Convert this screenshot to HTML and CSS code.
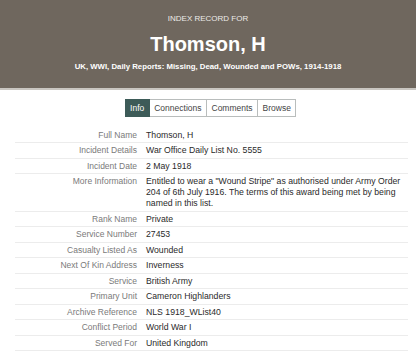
FILE: index.html
```html
<!DOCTYPE html>
<html>
  <head>
    <meta charset="utf-8" />
    <title>Thomson, H - Index Record</title>
    <link rel="stylesheet" href="styles.css">
  </head>
  <body>
    <div class="record-header">
      <div class="record-kicker">Index Record For</div>
      <h1>Thomson, H</h1>
      <div class="record-source">UK, WWI, Daily Reports: Missing, Dead, Wounded and POWs, 1914-1918</div>
    </div>

    <div class="tabs">
      <a class="tab active">Info</a>
      <a class="tab">Connections</a>
      <a class="tab">Comments</a>
      <a class="tab">Browse</a>
    </div>

    <div class="record-table">
      <div class="row"><div class="label">Full Name</div><div class="value">Thomson, H</div></div>
      <div class="row"><div class="label">Incident Details</div><div class="value">War Office Daily List No. 5555</div></div>
      <div class="row"><div class="label">Incident Date</div><div class="value">2 May 1918</div></div>
      <div class="row"><div class="label">More Information</div><div class="value">Entitled to wear a "Wound Stripe" as authorised under Army Order 204 of 6th July 1916. The terms of this award being met by being named in this list.</div></div>
      <div class="row"><div class="label">Rank Name</div><div class="value">Private</div></div>
      <div class="row"><div class="label">Service Number</div><div class="value">27453</div></div>
      <div class="row"><div class="label">Casualty Listed As</div><div class="value">Wounded</div></div>
      <div class="row"><div class="label">Next Of Kin Address</div><div class="value">Inverness</div></div>
      <div class="row"><div class="label">Service</div><div class="value">British Army</div></div>
      <div class="row"><div class="label">Primary Unit</div><div class="value">Cameron Highlanders</div></div>
      <div class="row"><div class="label">Archive Reference</div><div class="value">NLS 1918_WList40</div></div>
      <div class="row"><div class="label">Conflict Period</div><div class="value">World War I</div></div>
      <div class="row"><div class="label">Served For</div><div class="value">United Kingdom</div></div>
    </div>
  </body>
</html>
```

FILE: styles.css
```css
body {
  margin: 0;
  font-family: 'Liberation Sans', Arial, sans-serif;
  background: #FFFFFF;
  color: #333333;
}
.record-header {
  background: #6F675E;
  color: #FFFFFF;
  text-align: center;
  padding: 14px 0 16px 0;
  border-bottom: 2px solid #C9C6C1;
}
.record-kicker {
  font-size: 8px;
  line-height: 10px;
  text-transform: uppercase;
  color: #EDEBE8;
}
h1 {
  font-size: 20px;
  line-height: 24px;
  margin: 8px 0 0 0;
  font-weight: bold;
}
.record-source {
  font-size: 7.8px;
  line-height: 10px;
  margin-top: 6px;
  font-weight: bold;
}
/* tabs */
.tabs {
  display: flex;
  justify-content: center;
  margin: 9px 0 0 5px;
}
.tab {
  font-size: 8.5px;
  line-height: 16px;
  padding: 0 4.5px;
  border: 1px solid #B9BDBC;
  border-left: none;
  color: #444444;
  background: #FFFFFF;
}
.tab:first-child {
  border-left: 1px solid #B9BDBC;
}
.tab.active {
  background: #3D5B58;
  border-color: #3D5B58;
  color: #FFFFFF;
}
/* record rows */
.record-table {
  margin: 10.5px 8px 0 15px;
}
.row {
  display: grid;
  grid-template-columns: 122px 1fr;
  column-gap: 9px;
  padding: 2px 0 1.5px 0;
  border-bottom: 1px solid #ECECEC;
  font-size: 8.5px;
  line-height: 11px;
}
.label {
  text-align: right;
  color: #7A7A7A;
}
.value {
  font-size: 8.7px;
  color: #2A2A2A;
}
```
